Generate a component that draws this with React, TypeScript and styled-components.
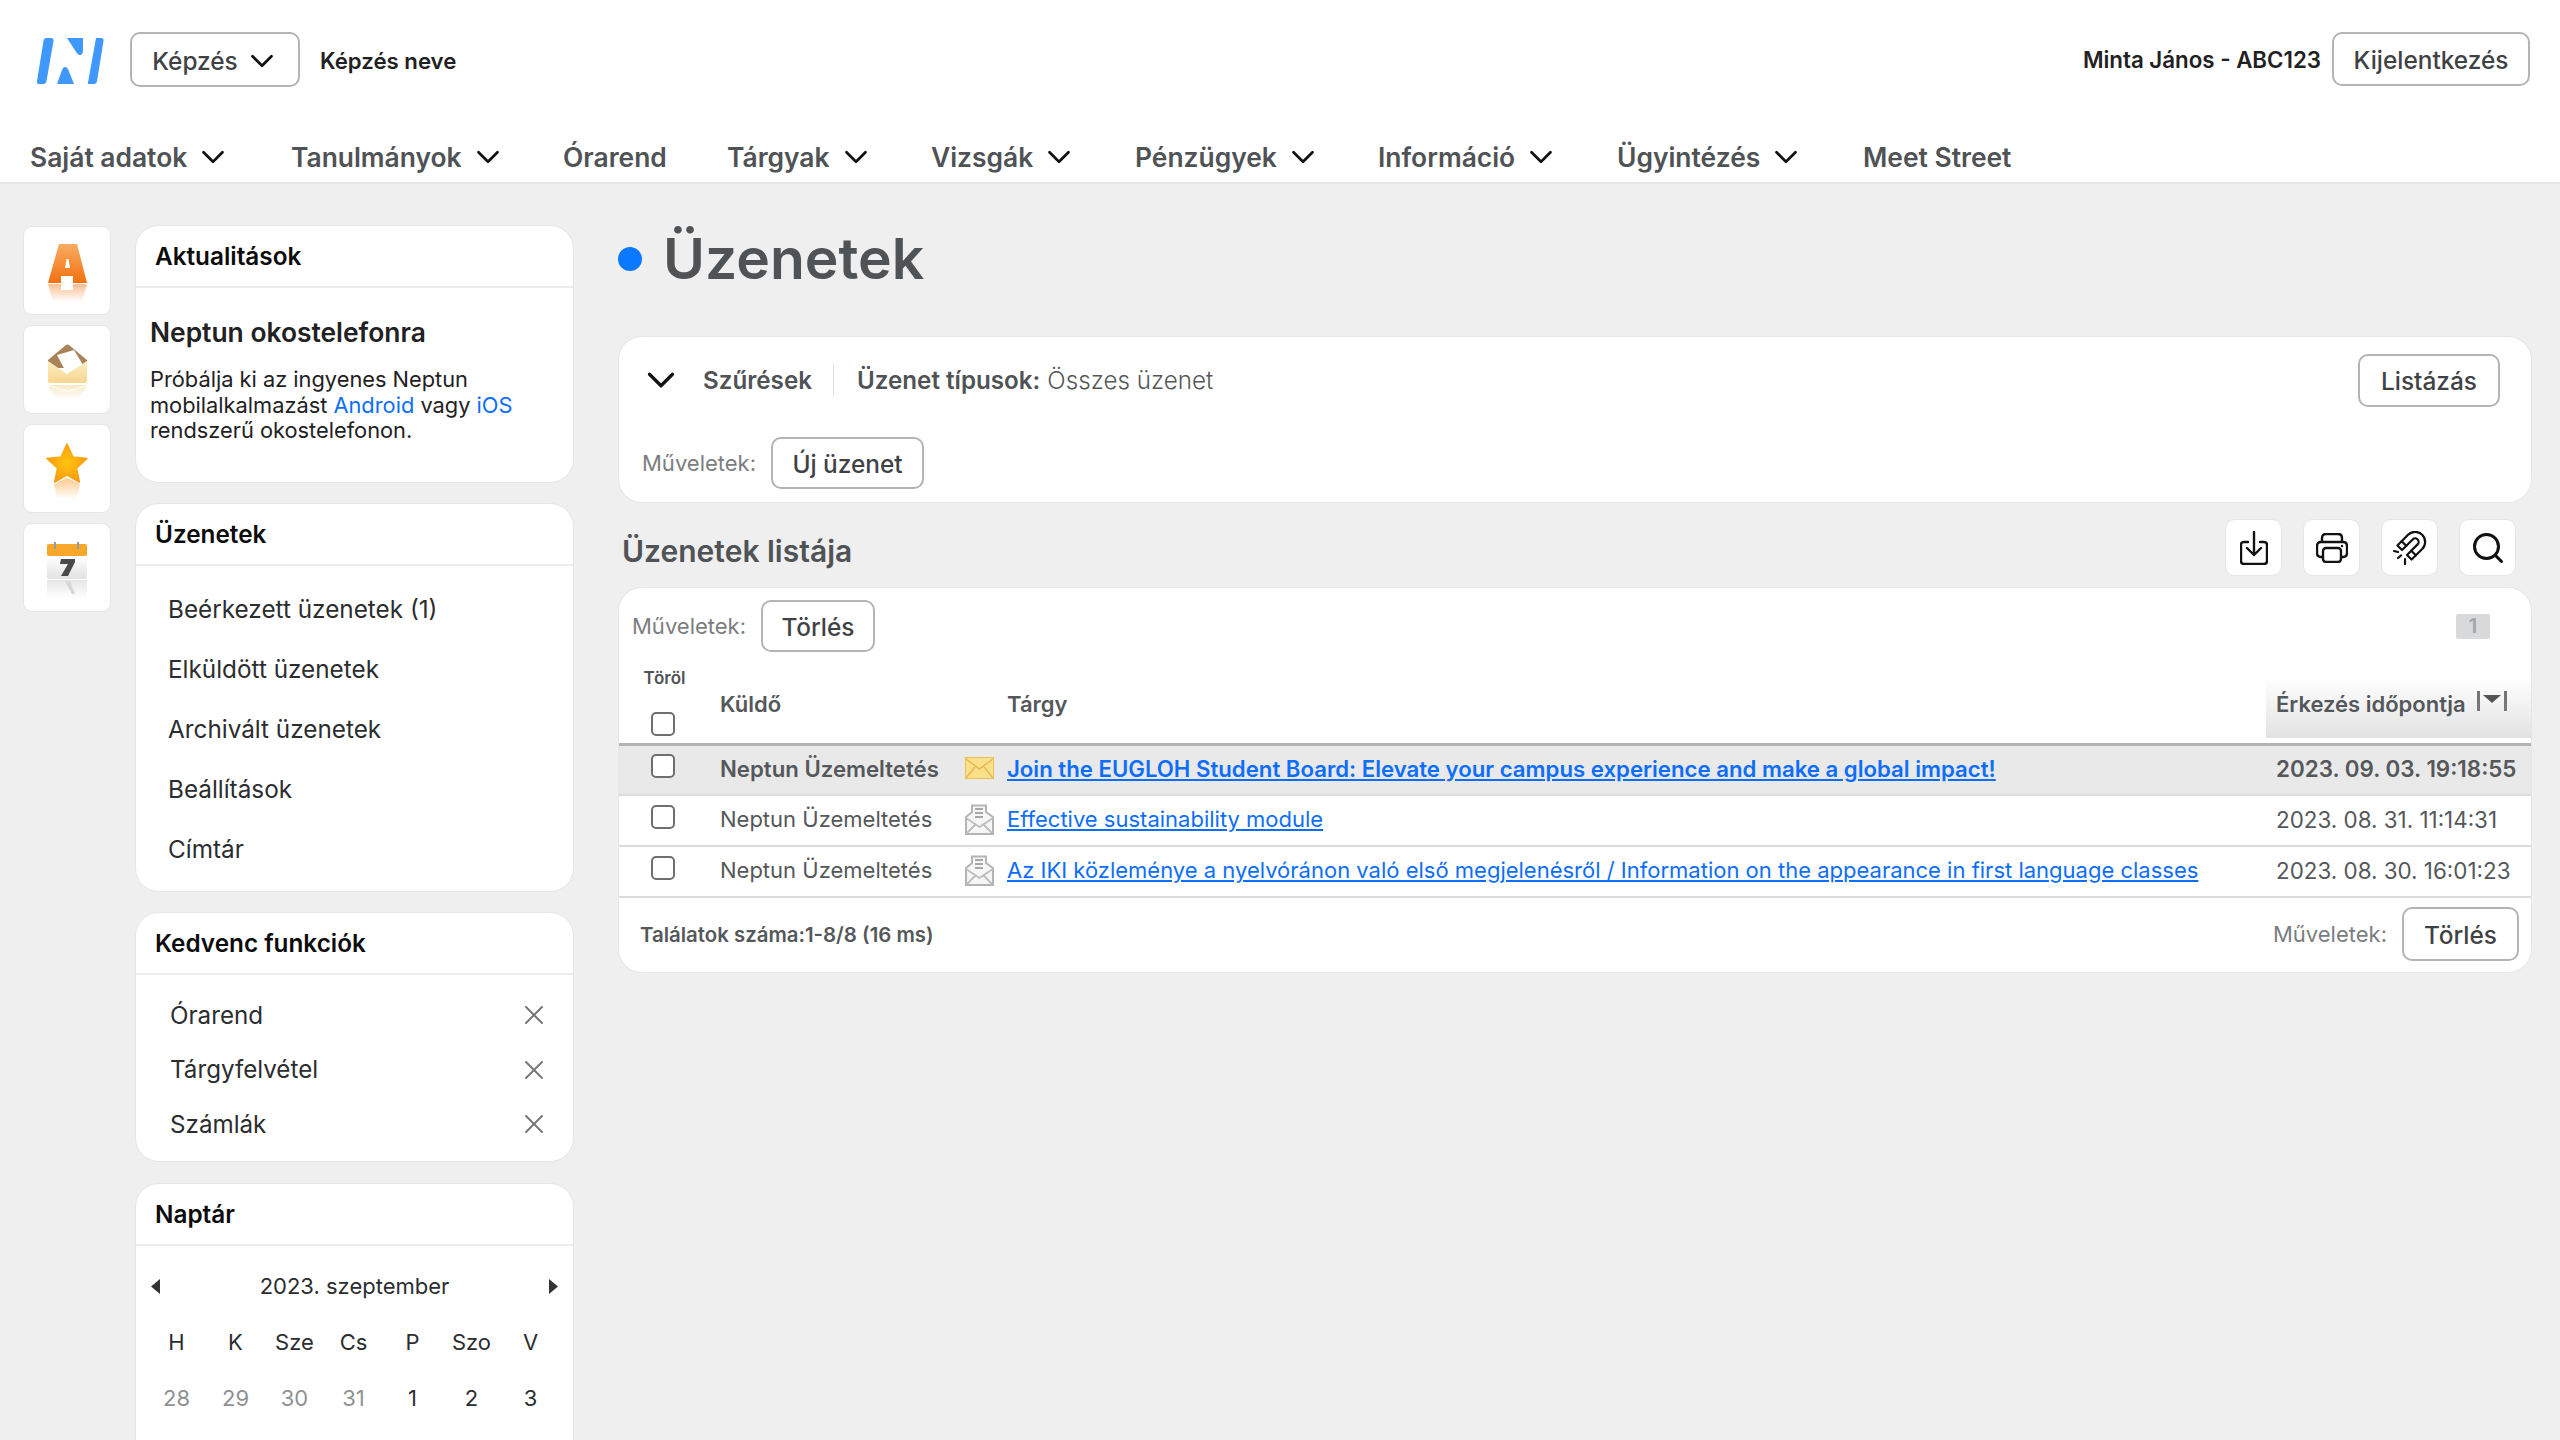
import React from "react";
import styled, { createGlobalStyle } from "styled-components";
import { ChevronDown, X, Search } from "lucide-react";

const GlobalStyle = createGlobalStyle`
  html, body {
    margin: 0;
    padding: 0;
    background: #efefef;
    height: 1440px;
    overflow: hidden;
  }
  body {
    font-family: Inter, "Liberation Sans", sans-serif;
    color: #505356;
  }
  * { box-sizing: border-box; }
`;

const Page = styled.div`
  width: 2560px;
  height: 1440px;
  overflow: hidden;
  display: flex;
  flex-direction: column;
`;

const Header = styled.header`
  background: #fff;
  height: 184px;
  border-bottom: 2px solid #e6e6e6;
  display: flex;
  flex-direction: column;
`;

const TopBar = styled.div`
  height: 120px;
  padding: 32px 30px 0 37px;
  display: flex;
  align-items: flex-start;
`;

const Logo = styled.svg`
  width: 67px;
  height: 46px;
  margin: 6px 26px 0 0;
`;

const OutlineButton = styled.button<{ $w: number; $h: number }>`
  width: ${(p) => p.$w}px;
  height: ${(p) => p.$h}px;
  border: 2px solid #b4b4b4;
  border-radius: 10px;
  background: #fff;
  color: #3f4245;
  font: 500 24.4px Inter, sans-serif;
  padding: 1px 0 0;
  display: inline-flex;
  align-items: center;
  justify-content: center;
  gap: 8px;
  flex: none;
`;

const ProgramButton = styled(OutlineButton)`
  gap: 5px;
  padding: 2px 0 0 3px;
`;

const PushedButton = styled(OutlineButton)`
  margin-left: auto;
`;

const ProgramName = styled.span`
  font-size: 22.2px;
  font-weight: 600;
  color: #1f2123;
  line-height: 57px;
  margin-left: 20px;
`;

const UserBox = styled.div`
  margin-left: auto;
  display: flex;
  align-items: center;
  gap: 11px;
  font-size: 22.3px;
  font-weight: 600;
  color: #1f2123;
`;

const Nav = styled.nav`
  display: flex;
  align-items: center;
  height: 62px;
  padding: 12px 0 0 30px;
`;

const NavItem = styled.span<{ $w: number }>`
  width: ${(p) => p.$w}px;
  flex: none;
  display: flex;
  align-items: center;
  gap: 7px;
  font-size: 26.4px;
  font-weight: 600;
  color: #505356;
  white-space: nowrap;
`;

const Body = styled.div`
  flex: 1;
  display: flex;
  min-height: 0;
  padding: 41px 28px 0 23px;
`;

const Rail = styled.div`
  width: 88px;
  flex: none;
  display: flex;
  flex-direction: column;
  gap: 10px;
  padding-top: 1px;
`;

const RailTile = styled.div`
  height: 89px;
  padding-top: 4px;
  background: #fff;
  border: 1px solid #e6e6e6;
  border-radius: 9px;
  display: flex;
  align-items: center;
  justify-content: center;
`;

const Side = styled.aside`
  width: 439px;
  flex: none;
  margin-left: 24px;
  display: flex;
  flex-direction: column;
  gap: 20px;
`;

const Panel = styled.section<{ $h: number }>`
  background: #fff;
  border: 1px solid #e6e6e6;
  border-radius: 24px;
  flex: none;
  height: ${(p) => p.$h}px;
`;

const CalendarPanel = styled(Panel)`
  margin-top: 1px;
`;

const PanelTitle = styled.h3`
  margin: 0;
  height: 62px;
  border-bottom: 2px solid #ececec;
  padding-left: 19px;
  font-size: 24.3px;
  font-weight: 600;
  line-height: 60px;
  color: #0c0c0c;
`;

const News = styled.div`
  padding: 28px 14px 0 14px;
`;

const NewsTitle = styled.h4`
  margin: 0 0 19px;
  font-size: 26.4px;
  font-weight: 600;
  line-height: 32px;
  color: #1f2123;
`;

const NewsText = styled.p`
  margin: 0;
  font-size: 21.8px;
  line-height: 25.5px;
  color: #1f2123;
`;

const BlueLink = styled.a`
  color: #0d6efd;
`;

const MenuList = styled.div`
  padding: 13px 0 0 32px;
`;

const MenuRow = styled.div`
  height: 60px;
  display: flex;
  align-items: center;
  font-size: 24.3px;
  color: #2b2d2f;
`;

const FavList = styled.div`
  padding: 13px 23px 0 34px;
`;

const FavRow = styled.div`
  height: 54.5px;
  display: flex;
  align-items: center;
  justify-content: space-between;
  font-size: 24.2px;
  color: #2b2d2f;
`;

const CalHead = styled.div`
  display: flex;
  align-items: center;
  justify-content: space-between;
  height: 56px;
  margin-top: 12px;
  padding: 0 15px;
  font-size: 22px;
  color: #2b2d2f;
`;

const CalGrid = styled.div`
  display: grid;
  grid-template-columns: repeat(7, 59px);
  padding-left: 11px;
  font-size: 22px;
`;

const CalCell = styled.div<{ $muted?: boolean }>`
  height: 56px;
  display: flex;
  align-items: center;
  justify-content: center;
  color: ${(p) => (p.$muted ? "#8f9193" : "#2b2d2f")};
`;

const Main = styled.main`
  flex: 1;
  min-width: 0;
  margin-left: 44px;
`;

const PageTitle = styled.h1`
  margin: 0;
  height: 111px;
  display: flex;
  align-items: center;
  gap: 21px;
  font-size: 57px;
  font-weight: 600;
  color: #505356;
  padding: 0 0 44px 0;
`;

const TitleDot = styled.span`
  width: 24px;
  height: 24px;
  border-radius: 50%;
  background: #0a78ff;
`;

const Card = styled.section`
  background: #fff;
  border: 1px solid #e6e6e6;
  border-radius: 24px;
`;

const FilterCard = styled(Card)`
  height: 167px;
  padding: 16px 31px 0 19px;
`;

const FilterRow = styled.div`
  display: flex;
  align-items: center;
  height: 54px;
  font-size: 24.2px;
`;

const FilterName = styled.span`
  font-weight: 600;
  margin-left: 19px;
`;

const FilterDivider = styled.span`
  width: 1px;
  height: 32px;
  background: #dcdcdc;
  margin: 0 23px 0 21px;
`;

const FilterKey = styled.strong`
  font-weight: 600;
`;

const FilterValue = styled.span`
  font-weight: 300;
  color: #55585a;
  margin-left: 7px;
`;

const ActionRow = styled.div`
  display: flex;
  align-items: center;
  gap: 15px;
  font-size: 22px;
  color: #7b7e80;
`;

const FilterActions = styled(ActionRow)`
  margin: 30px 0 0 4px;
`;

const ListHead = styled.div`
  height: 84px;
  display: flex;
  align-items: center;
  justify-content: space-between;
  padding: 5px 16px 0 4px;
`;

const ListTitle = styled.h2`
  margin: 7px 0 0;
  font-size: 30px;
  font-weight: 600;
  color: #505356;
`;

const ToolGroup = styled.div`
  display: flex;
  gap: 21px;
`;

const ToolButton = styled.div`
  width: 57px;
  height: 57px;
  background: #fff;
  border: 1px solid #e6e6e6;
  border-radius: 10px;
  display: flex;
  align-items: center;
  justify-content: center;
`;

const GridCard = styled(Card)`
  height: 386px;
  display: flex;
  flex-direction: column;
`;

const GridTools = styled.div`
  height: 78px;
  flex: none;
  padding: 0 41px 2px 13px;
  display: flex;
  align-items: center;
  justify-content: space-between;
`;

const Pager = styled.span`
  width: 34px;
  height: 25px;
  background: #d8d9da;
  border-radius: 2px;
  font-size: 20px;
  font-weight: 600;
  color: #a3a5a7;
  display: flex;
  align-items: center;
  justify-content: center;
`;

const Table = styled.table`
  width: 100%;
  border-collapse: collapse;
  table-layout: fixed;
`;

const Th = styled.th<{ $sorted?: boolean }>`
  height: 78px;
  padding: 0 0 0 10px;
  text-align: left;
  font-size: 22px;
  font-weight: 600;
  color: #55585a;
  vertical-align: middle;
  border-bottom: 3px solid #b3b3b3;
  position: relative;
  ${(p) =>
    p.$sorted
      ? "background: linear-gradient(#fff 0%, #fff 15%, #e2e2e2 93%, #fff 94%);"
      : ""}
`;

const CheckTh = styled(Th)`
  padding: 2px 0 0;
  vertical-align: top;
`;

const DeleteLabel = styled.div`
  font-size: 17px;
  font-weight: 600;
  color: #505356;
  text-align: center;
  line-height: 20px;
`;

const CheckBox = styled.span`
  display: block;
  width: 24px;
  height: 24px;
  border: 2px solid #6f6f6f;
  border-radius: 5px;
  background: #fff;
  margin-left: 32px;
`;

const HeadCheck = styled(CheckBox)`
  margin-top: 24px;
`;

const SortMark = styled.svg`
  position: absolute;
  right: 24px;
  top: 25px;
`;

const Row = styled.tr<{ $unread?: boolean }>`
  height: 51px;
  background: ${(p) => (p.$unread ? "#e9e9e9" : "#fff")};
  font-weight: ${(p) => (p.$unread ? 600 : 400)};
  font-size: ${(p) => (p.$unread ? 22.2 : 22)}px;
`;

const Td = styled.td`
  padding: 0 0 3px 10px;
  color: #55585a;
  border-bottom: 2px solid #dcdcdc;
  white-space: nowrap;
  overflow: hidden;
`;

const CheckTd = styled(Td)`
  padding: 0 0 8px 0;
`;

const IconTd = styled(Td)`
  padding: 0 0 3px 13px;
  line-height: 0;
`;

const DateTd = styled(Td)`
  font-size: 22.4px;
`;

const Subject = styled.a`
  color: #0d6efd;
  text-decoration: underline;
`;

const GridFoot = styled.div`
  flex: 1;
  padding: 0 12px 2px 21px;
  display: flex;
  align-items: center;
  justify-content: space-between;
`;

const FootCount = styled.span`
  font-size: 20.4px;
  font-weight: 600;
  color: #55585a;
`;

const navItems: [string, number, boolean][] = [
  ["Saját adatok", 261, true],
  ["Tanulmányok", 272, true],
  ["Órarend", 164, false],
  ["Tárgyak", 204, true],
  ["Vizsgák", 204, true],
  ["Pénzügyek", 243, true],
  ["Információ", 239, true],
  ["Ügyintézés", 246, true],
  ["Meet Street", 200, false],
];

const messages = [
  {
    unread: true,
    subject:
      "Join the EUGLOH Student Board: Elevate your campus experience and make a global impact!",
    date: "2023. 09. 03. 19:18:55",
  },
  {
    unread: false,
    subject: "Effective sustainability module",
    date: "2023. 08. 31. 11:14:31",
  },
  {
    unread: false,
    subject:
      "Az IKI közleménye a nyelvóránon való első megjelenésről / Information on the appearance in first language classes",
    date: "2023. 08. 30. 16:01:23",
  },
];

const weekDays = ["H", "K", "Sze", "Cs", "P", "Szo", "V"];
const firstWeek = [
  ["28", true],
  ["29", true],
  ["30", true],
  ["31", true],
  ["1", false],
  ["2", false],
  ["3", false],
] as const;

function NeptunLogo() {
  return (
    <Logo viewBox="0 0 67 46">
      <path
        d="M9 0h5q3 0 2.500 3L9.500 43q-.5 3-3 3H2q-2.500 0-2-3L6.500 3q.5-3 2.500-3Z"
        fill="#3f98ff"
      />
      <path
        d="M59 0h5q3 0 2.500 3L60 43q-.5 3-3 3h-6q-.5 0 0-1.500Z"
        fill="#3f98ff"
      />
      <path d="M30 0H46V12q0 5-3 5-2 0-3.500-2.500Z" fill="#3f98ff" />
      <path d="M20 46 25 32q1-3 3-3t3 2L37 46Z" fill="#3f98ff" />
    </Logo>
  );
}

function LetterIcon() {
  return (
    <svg width="39" height="58" viewBox="0 0 39 58">
      <defs>
        <linearGradient id="aFill" x1="0" y1="0" x2="0" y2="1">
          <stop offset="0" stopColor="#f8ac62" />
          <stop offset="1" stopColor="#f2700f" />
        </linearGradient>
        <linearGradient id="aMirror" x1="0" y1="0" x2="0" y2="1">
          <stop offset="0" stopColor="#f9bf94" />
          <stop offset="1" stopColor="#fff" />
        </linearGradient>
      </defs>
      <path
        d="M11 0h18l10 39H25V32H13v7H0Z M17 24h5l-1.500-9h-2Z"
        fill="url(#aFill)"
        fillRule="evenodd"
      />
      <path d="M0 40H13v6H25V40H39L34 58H5Z" fill="url(#aMirror)" />
    </svg>
  );
}

function EnvelopeIcon() {
  return (
    <svg width="39" height="55" viewBox="0 0 39 55">
      <defs>
        <linearGradient id="eBody" x1="0" y1="0" x2="0" y2="1">
          <stop offset="0" stopColor="#fdeec4" />
          <stop offset="1" stopColor="#f6d690" />
        </linearGradient>
        <linearGradient id="eMirror" x1="0" y1="0" x2="0" y2="1">
          <stop offset="0" stopColor="#f8e8c4" />
          <stop offset="1" stopColor="#fff" />
        </linearGradient>
      </defs>
      <path d="M0 16 18 1q1.500-1 3 0L39 16v8H0Z" fill="#a98358" />
      <path d="M9 11 26 6l9 15-16 9Z" fill="#fff" />
      <path d="M0 17 19 30 39 17v20q0 2-2 2H2q-2 0-2-2Z" fill="url(#eBody)" />
      <path d="M0 41H39L20 47Zm0 1 20 6 19-6-8 13H8Z" fill="url(#eMirror)" />
    </svg>
  );
}

function StarIcon() {
  return (
    <svg width="42" height="56" viewBox="0 0 42 56">
      <defs>
        <radialGradient id="sFill" cx=".5" cy=".5" r=".6">
          <stop offset="0" stopColor="#fec40f" />
          <stop offset="1" stopColor="#f99410" />
        </radialGradient>
        <linearGradient id="sMirror" x1="0" y1="0" x2="0" y2="1">
          <stop offset="0" stopColor="#fbc98a" />
          <stop offset="1" stopColor="#fff" />
        </linearGradient>
      </defs>
      <path
        d="M21 1 26.900 13.900 41 15.500 30.500 25.100 33.300 39 21 32 8.700 39 11.500 25.100 1 15.500 15.100 13.900Z"
        fill="url(#sFill)"
        stroke="url(#sFill)"
        strokeWidth="1.500"
        strokeLinejoin="round"
      />
      <path d="M8 41 21 35l13 6-3 15H11Z" fill="url(#sMirror)" />
    </svg>
  );
}

function CalendarIcon() {
  return (
    <svg width="40" height="56" viewBox="0 0 40 56">
      <defs>
        <linearGradient id="cBody" x1="0" y1="0" x2="0" y2="1">
          <stop offset="0" stopColor="#fff" />
          <stop offset="1" stopColor="#e2e2e2" />
        </linearGradient>
        <linearGradient id="cMirror" x1="0" y1="0" x2="0" y2="1">
          <stop offset="0" stopColor="#e6e6e6" />
          <stop offset="1" stopColor="#fff" />
        </linearGradient>
      </defs>
      <rect x="0" y="2" width="40" height="12" rx="2" fill="#f7a72c" />
      <rect x="7" y="0" width="2" height="7" fill="#8f9ea8" />
      <rect x="30" y="0" width="2" height="7" fill="#8f9ea8" />
      <rect x="0" y="14" width="40" height="23" rx="2" fill="url(#cBody)" />
      <path d="M14 17H28V20L21 34H14L21 22H13Z" fill="#4a4a4a" />
      <rect x="0" y="38" width="40" height="18" fill="url(#cMirror)" />
      <path d="M18 39h5l5 13h-3Z" fill="#d6d6d6" />
    </svg>
  );
}

function ClosedMail() {
  return (
    <svg width="29" height="22" viewBox="0 0 29 22">
      <rect x="0.500" y="0.500" width="28" height="21" fill="#fbe08c" stroke="#eec14e" />
      <path
        d="M1 2 14.500 12 28 2M1 21l9-11M28 21l-9-11"
        fill="none"
        stroke="#e7b950"
        strokeWidth="1.500"
      />
    </svg>
  );
}

function OpenMail() {
  return (
    <svg width="29" height="31" viewBox="0 0 29 31">
      <path d="M1 13 7 8V1.500h14V8l7 5v17H1Z" fill="#f6f6f6" stroke="#b4b4b4" strokeWidth="2" />
      <path d="M10 5h8M10 9h8M10 13h8" stroke="#a8a8a8" strokeWidth="2" />
      <path
        d="M1 14 14.500 23 28 14M2 29 11 20M27 29 18 20"
        fill="none"
        stroke="#bdbdbd"
        strokeWidth="1.800"
      />
    </svg>
  );
}

function DownloadIcon() {
  return (
    <svg width="28" height="34" viewBox="0 0 28 34" fill="none" stroke="#111" strokeWidth="2.400" strokeLinecap="round" strokeLinejoin="round">
      <path d="M8 11H4q-3 0-3 3v16q0 3 3 3h20q3 0 3-3V14q0-3-3-3h-4" />
      <path d="M14 1v23M7 17l7 7 7-7" />
    </svg>
  );
}

function PrinterIcon() {
  return (
    <svg width="32" height="30" viewBox="0 0 32 30" fill="none" stroke="#111" strokeWidth="2.400" strokeLinejoin="round">
      <path d="M6 9V5q0-4 4-4h12q4 0 4 4v4" />
      <path d="M7 24H5q-4 0-4-4v-7q0-4 4-4h22q4 0 4 4v7q0 4-4 4h-2" />
      <rect x="7" y="15" width="18" height="14" rx="3" />
      <circle cx="26" cy="13" r="1.200" fill="#111" stroke="none" />
    </svg>
  );
}

function MagnetIcon() {
  return (
    <svg width="34" height="34" viewBox="0 0 34 34" fill="none" stroke="#111" strokeWidth="2.200" strokeLinecap="round" strokeLinejoin="round">
      <g transform="translate(20 13) rotate(45)">
        <path d="M-10 12V-3a10 10 0 0 1 20 0V12H3.500V-3a3.500 3.500 0 0 0-7 0V12Z" />
        <path d="M-10 6H-3.500M3.500 6H10" />
      </g>
      <path d="M1 20 5 21M5 27 8 24.500M12 28V33" />
    </svg>
  );
}

export default function App() {
  return (
    <Page>
      <GlobalStyle />
      <Header>
        <TopBar>
          <NeptunLogo />
          <ProgramButton $w={170} $h={55}>
            Képzés <ChevronDown size={38} color="#111" strokeWidth={1.700} />
          </ProgramButton>
          <ProgramName>Képzés neve</ProgramName>
          <UserBox>
            Minta János - ABC123
            <OutlineButton $w={198} $h={54}>Kijelentkezés</OutlineButton>
          </UserBox>
        </TopBar>
        <Nav>
          {navItems.map(([label, width, hasMenu]) => (
            <NavItem key={label} $w={width}>
              {label}
              {hasMenu && <ChevronDown size={38} color="#111" strokeWidth={1.700} />}
            </NavItem>
          ))}
        </Nav>
      </Header>
      <Body>
        <Rail>
          <RailTile><LetterIcon /></RailTile>
          <RailTile><EnvelopeIcon /></RailTile>
          <RailTile><StarIcon /></RailTile>
          <RailTile><CalendarIcon /></RailTile>
        </Rail>
        <Side>
          <Panel $h={258}>
            <PanelTitle>Aktualitások</PanelTitle>
            <News>
              <NewsTitle>Neptun okostelefonra</NewsTitle>
              <NewsText>
                Próbálja ki az ingyenes Neptun mobilalkalmazást{" "}
                <BlueLink>Android</BlueLink> vagy <BlueLink>iOS</BlueLink>{" "}
                rendszerű okostelefonon.
              </NewsText>
            </News>
          </Panel>
          <Panel $h={389}>
            <PanelTitle>Üzenetek</PanelTitle>
            <MenuList>
              <MenuRow>Beérkezett üzenetek (1)</MenuRow>
              <MenuRow>Elküldött üzenetek</MenuRow>
              <MenuRow>Archivált üzenetek</MenuRow>
              <MenuRow>Beállítások</MenuRow>
              <MenuRow>Címtár</MenuRow>
            </MenuList>
          </Panel>
          <Panel $h={250}>
            <PanelTitle>Kedvenc funkciók</PanelTitle>
            <FavList>
              {["Órarend", "Tárgyfelvétel", "Számlák"].map((name) => (
                <FavRow key={name}>
                  {name}
                  <X size={32} color="#777" strokeWidth={1.500} />
                </FavRow>
              ))}
            </FavList>
          </Panel>
          <CalendarPanel $h={400}>
            <PanelTitle>Naptár</PanelTitle>
            <CalHead>
              <svg width="9" height="15" viewBox="0 0 9 15"><path d="M9 0v15L0 7.500Z" fill="#333" /></svg>
              2023. szeptember
              <svg width="9" height="15" viewBox="0 0 9 15"><path d="M0 0v15l9-7.500Z" fill="#333" /></svg>
            </CalHead>
            <CalGrid>
              {weekDays.map((d) => (
                <CalCell key={d}>{d}</CalCell>
              ))}
              {firstWeek.map(([d, muted]) => (
                <CalCell key={d} $muted={muted}>{d}</CalCell>
              ))}
            </CalGrid>
          </CalendarPanel>
        </Side>
        <Main>
          <PageTitle>
            <TitleDot />
            Üzenetek
          </PageTitle>
          <FilterCard>
            <FilterRow>
              <ChevronDown size={46} color="#111" strokeWidth={1.700} />
              <FilterName>Szűrések</FilterName>
              <FilterDivider />
              <FilterKey>Üzenet típusok:</FilterKey>
              <FilterValue>Összes üzenet</FilterValue>
              <PushedButton $w={142} $h={53}>Listázás</PushedButton>
            </FilterRow>
            <FilterActions>
              Műveletek:
              <OutlineButton $w={153} $h={52}>Új üzenet</OutlineButton>
            </FilterActions>
          </FilterCard>
          <ListHead>
            <ListTitle>Üzenetek listája</ListTitle>
            <ToolGroup>
              <ToolButton><DownloadIcon /></ToolButton>
              <ToolButton><PrinterIcon /></ToolButton>
              <ToolButton><MagnetIcon /></ToolButton>
              <ToolButton><Search size={36} color="#111" strokeWidth={2} /></ToolButton>
            </ToolGroup>
          </ListHead>
          <GridCard>
            <GridTools>
              <ActionRow>
                Műveletek:
                <OutlineButton $w={114} $h={52}>Törlés</OutlineButton>
              </ActionRow>
              <Pager>1</Pager>
            </GridTools>
            <Table>
              <colgroup>
                <col width="91" />
                <col width="242" />
                <col width="45" />
                <col />
                <col width="265" />
              </colgroup>
              <thead>
                <tr>
                  <CheckTh>
                    <DeleteLabel>Töröl</DeleteLabel>
                    <HeadCheck />
                  </CheckTh>
                  <Th>Küldő</Th>
                  <Th />
                  <Th>Tárgy</Th>
                  <Th $sorted>
                    Érkezés időpontja
                    <SortMark width="30" height="20" viewBox="0 0 30 20">
                      <path d="M1.500 0v20M28.500 0v20" stroke="#777" strokeWidth="3" />
                      <path d="M6 4H24L15 12Z" fill="#555" />
                    </SortMark>
                  </Th>
                </tr>
              </thead>
              <tbody>
                {messages.map((m) => (
                  <Row key={m.date} $unread={m.unread}>
                    <CheckTd><CheckBox /></CheckTd>
                    <Td>Neptun Üzemeltetés</Td>
                    <IconTd>{m.unread ? <ClosedMail /> : <OpenMail />}</IconTd>
                    <Td><Subject>{m.subject}</Subject></Td>
                    <DateTd>{m.date}</DateTd>
                  </Row>
                ))}
              </tbody>
            </Table>
            <GridFoot>
              <FootCount>Találatok száma:1-8/8 (16 ms)</FootCount>
              <ActionRow>
                Műveletek:
                <OutlineButton $w={117} $h={54}>Törlés</OutlineButton>
              </ActionRow>
            </GridFoot>
          </GridCard>
        </Main>
      </Body>
    </Page>
  );
}
